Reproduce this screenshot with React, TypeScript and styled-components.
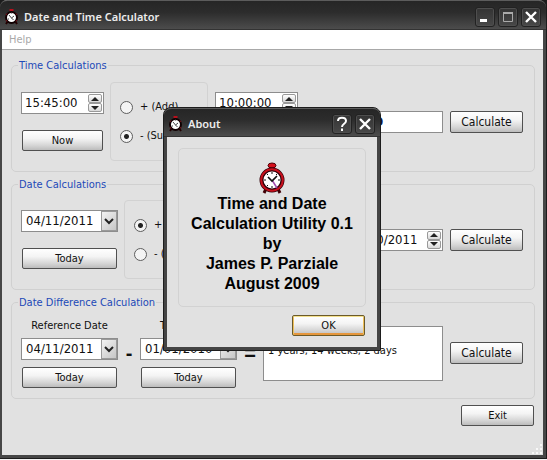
import React from "react";
import styled, { createGlobalStyle } from "styled-components";

const UI = '"DejaVu Sans Condensed", "DejaVu Sans", sans-serif';
const CAPTION = '"Noto Sans", "Open Sans", sans-serif';

const GlobalStyle = createGlobalStyle`
  *, *::before, *::after { box-sizing: border-box; }
  body { margin: 0; background: #2a2a2a; }
  button, input, select, textarea { font: inherit; color: inherit; margin: 0; }
`;

const Desktop = styled.div`
  min-height: 100vh;
  display: flex;
  flex-direction: column;
  padding: 0 1px 1px 0;
  border-bottom: 1px solid #f4f4f4;
  background: #1c1c1c;
  font: 11px/16px ${UI};
  color: #101010;
`;

const Window = styled.div`
  position: relative;
  flex: 1;
  display: flex;
  flex-direction: column;
  border: solid #464646;
  border-width: 0 3px 3px 2px;
  border-radius: 7px 7px 0 0;
  background: #e1e1e1;
`;

const TitleBar = styled.header`
  display: flex;
  align-items: center;
  height: 30px;
  margin: 0 -3px 0 -2px;
  padding: 3px 5px 0 4px;
  gap: 3px;
  border-top: 1px solid #5c5c5c;
  border-bottom: 1px solid #333;
  border-radius: 7px 7px 0 0;
  background: linear-gradient(#262626, #2c2c2c 40%, #4c4c4c);
`;

const Caption = styled.h1`
  flex: 1;
  margin: 0 0 0 1px;
  font: 600 11px/16px ${CAPTION};
  color: #ececec;
`;

const CaptionButton = styled.button`
  display: grid;
  place-items: center;
  width: 20px;
  height: 20px;
  padding: 0;
  border: 1px solid #222;
  border-radius: 3px;
  background: linear-gradient(#333, #484848);
  box-shadow: inset 0 0 0 1px #4e4e4e;
`;

const MenuBar = styled.nav`
  height: 20px;
  padding: 2px 6px 0;
  border-bottom: 1px solid #a8a8a8;
  background: #fff;
`;

const MenuItem = styled.button`
  display: block;
  padding: 0 1px;
  border: 0;
  background: none;
  &:disabled { color: #a9a9a9; }
`;

const Form = styled.main`
  display: flex;
  flex-direction: column;
  gap: 6px;
  padding: 9px 8px 0 9px;
`;

const Group = styled.fieldset<{ $top?: number }>`
  display: block;
  min-width: 0;
  margin: 0;
  padding: ${(p) => p.$top ?? 10}px 11px 10px 9px;
  border: 1px solid #d0d0d0;
  border-radius: 5px;
`;

const Legend = styled.legend`
  margin-left: -3px;
  padding: 0 1px;
  line-height: 13px;
  color: #2149b8;
`;

const Row = styled.div`
  display: flex;
  align-items: center;
`;

const Stack = styled.div<{ $wide?: boolean; $gap?: number }>`
  display: flex;
  flex: none;
  flex-direction: column;
  gap: ${(p) => p.$gap ?? 16}px;
  width: ${(p) => (p.$wide ? 97 : 83)}px;
`;

const RadioBox = styled.div`
  display: flex;
  flex: none;
  flex-direction: column;
  gap: 13px;
  width: 98px;
  height: 79px;
  margin: 0 7px 0 6px;
  padding: 16px 9px 0;
  border: 1px solid #d2d2d2;
  border-radius: 4px;
`;

const RadioLabel = styled.label`
  display: flex;
  align-items: center;
  gap: 7px;
  white-space: nowrap;
`;

const Radio = styled.input`
  appearance: none;
  flex: none;
  width: 13px;
  height: 13px;
  border: 1px solid #5e5e5e;
  border-radius: 50%;
  background: #f4f4f4;
  &:checked { background: radial-gradient(circle, #222 2px, #f4f4f4 3px); }
`;

const Field = styled.div<{ $wide?: boolean }>`
  display: flex;
  flex: none;
  width: ${(p) => (p.$wide ? "97px" : "auto")};
  height: 22px;
  padding: 1px;
  border: 1px solid #8d8d8d;
  background: #fff;
`;

const Value = styled.input`
  flex: 1;
  min-width: 0;
  width: 0;
  padding: 0 0 0 2px;
  border: 0;
  outline: 0;
  background: none;
  font-size: 13px;
  line-height: 18px;
`;

const Steps = styled.div`
  display: grid;
  flex: none;
  grid-template-rows: 1fr 1fr;
  width: 14px;
`;

const Step = styled.button`
  display: grid;
  place-items: center;
  padding: 0;
  border: 1px solid #999;
  border-radius: 2px;
  background: linear-gradient(#fff, #d8d8d8);
`;

const Picker = styled.div`
  display: grid;
  grid-template-columns: 1fr 16px;
  height: 22px;
  border: 1px solid #8d8d8d;
  background: #fff;
`;

const PickerSelect = styled.select`
  grid-area: 1 / 1 / 2 / 3;
  appearance: none;
  padding: 0 0 0 4px;
  border: 0;
  outline: 0;
  background: none;
  font-size: 13px;
`;

const PickerArrow = styled.span`
  grid-area: 1 / 2;
  display: grid;
  place-items: center;
  border: 1px solid #9a9a9a;
  background: linear-gradient(135deg, #f2f2f2, #c6c6c6);
  pointer-events: none;
`;

const Push = styled.button<{ $big?: boolean; $focus?: boolean }>`
  flex: none;
  width: ${(p) => (p.$big || p.$focus ? "73px" : "auto")};
  height: ${(p) => (p.$big ? 22 : 21)}px;
  margin: ${(p) => (p.$big || p.$focus ? "0" : "0 1px")};
  padding: 0;
  border: 1px solid #505050;
  border-radius: 2px;
  background: linear-gradient(#fff, #f4f4f4 40%, #d6d6d6 75%, #bcbcbc);
  font-size: ${(p) => (p.$big ? 12 : 11)}px;
  ${(p) =>
    p.$focus &&
    `border-color: #6b5a2a;
     box-shadow: inset 0 1px #f3e08c, inset 1px 0 #eec05c, inset -1px 0 #eec05c, inset 0 -2px #e5963c;`}
`;

const ExitButton = styled(Push)`
  width: 73px;
  align-self: flex-end;
`;

const Sign = styled.span<{ $width: number }>`
  flex: none;
  width: ${(p) => p.$width}px;
  font: bold 20px/22px "Liberation Sans", sans-serif;
  text-align: center;
`;

const Spacer = styled.span`
  flex: 1;
`;

const Result = styled.input`
  flex: 1;
  min-width: 0;
  width: 0;
  height: 22px;
  padding: 0 3px;
  border: 1px solid #8d8d8d;
  background: #fff;
  font-size: 13px;
  font-weight: bold;
  color: #10103c;
`;

const Summary = styled.textarea`
  flex: 1;
  min-width: 0;
  width: 0;
  height: 55px;
  padding: 16px 4px 0;
  border: 1px solid #8d8d8d;
  background: #fff;
  resize: none;
  overflow: hidden;
  line-height: 16px;
`;

const Calc = styled(Push)`
  margin-left: 7px;
`;

const FieldLabel = styled.label`
  margin-bottom: -3px;
  text-align: center;
`;

const Grip = styled.svg`
  align-self: flex-end;
  margin-top: auto;
`;

const Dialog = styled.section`
  position: absolute;
  top: 108px;
  left: 162px;
  width: 216px;
  border: solid #444;
  border-width: 0 3px 3px;
  border-radius: 7px 7px 0 0;
  outline: 1px solid #1d1d1d;
  background: #e1e1e1;
`;

const DialogBar = styled(TitleBar)`
  height: 29px;
  margin: 0 -3px;
`;

const DialogBody = styled.div`
  display: flex;
  flex-direction: column;
  gap: 8px;
  padding: 11px;
`;

const AboutBox = styled.div`
  display: flex;
  flex-direction: column;
  align-items: center;
  padding: 13px 0 12px;
  border: 1px solid #d2d2d2;
  border-radius: 5px;
`;

const AboutText = styled.p`
  margin: 0;
  font: bold 16px/20px "Liberation Sans", Arial, sans-serif;
  text-align: center;
  white-space: nowrap;
  color: #000;
`;

const OkButton = styled(Push)`
  align-self: flex-end;
  margin-right: 1px;
`;

function Clock() {
  return (
    <svg width="26" height="32" viewBox="0 0 26 32" aria-hidden="true">
      <path d="M7 27l-2 4M19 27l2 4" stroke="#400006" strokeWidth="3" />
      <path d="M11 5h4v4h-4z" fill="#500008" />
      <ellipse cx="13" cy="3.500" rx="4" ry="2.500" fill="#d5101c" stroke="#500008" />
      <circle cx="13" cy="18" r="10.500" fill="#fff" stroke="#30000a" strokeWidth="4" />
      <circle cx="13" cy="18" r="10.800" fill="none" stroke="#c8101c" strokeWidth="2" />
      <path d="M13 10v2M13 24v2M5 18h2M19 18h2M8 12l1 1M18 12l-1 1M8 24l1-1" stroke="#111" />
      <path d="M13 18l5 8" stroke="#a24aae" strokeWidth="1.500" />
      <path d="M9 15l4 4 5-5" fill="none" stroke="#111" strokeWidth="1.700" />
    </svg>
  );
}

function SmallClock() {
  return (
    <svg width="16" height="16" viewBox="0 0 16 16" aria-hidden="true">
      <path d="M4 12l-2 3M11 12l2 3" stroke="#200" strokeWidth="2" />
      <circle cx="7.500" cy="8.500" r="5.500" fill="#fff" stroke="#100002" strokeWidth="2" />
      <path d="M2 6l1-1.500M12 4.500L13 6M2 11l1 1.500M12 12.500l1-1.500" stroke="#80101a" />
      <path d="M5.500 0h4v2h-4z" fill="#b8101c" />
      <path d="M5 6l2.500 3L10 7M7.500 9l2 2M4 10h1M7 4h1" fill="none" stroke="#444" />
    </svg>
  );
}

function Close() {
  return (
    <svg width="12" height="12" viewBox="0 0 12 12">
      <path d="M1 1l10 10M11 1L1 11" stroke="#fff" strokeWidth="2.400" />
    </svg>
  );
}

function Spin({ label, value, wide }: { label: string; value: string; wide?: boolean }) {
  return (
    <Field $wide={wide}>
      <Value aria-label={label} defaultValue={value} />
      <Steps>
        <Step aria-label={`${label} up`}>
          <svg width="8" height="4"><path d="M0 4l4-4 4 4z" fill="#222" /></svg>
        </Step>
        <Step aria-label={`${label} down`}>
          <svg width="8" height="4"><path d="M0 0l4 4 4-4z" fill="#222" /></svg>
        </Step>
      </Steps>
    </Field>
  );
}

function DatePicker({ id, label, value }: { id?: string; label?: string; value: string }) {
  return (
    <Picker>
      <PickerArrow>
        <svg width="10" height="7" viewBox="0 0 10 7">
          <path d="M1 1l4 4 4-4" fill="none" stroke="#222" strokeWidth="2" />
        </svg>
      </PickerArrow>
      <PickerSelect id={id} aria-label={label}>
        <option>{value}</option>
      </PickerSelect>
    </Picker>
  );
}

function Operation({ name, add }: { name: string; add?: boolean }) {
  return (
    <RadioBox role="radiogroup" aria-label="Operation">
      <RadioLabel><Radio type="radio" name={name} defaultChecked={add} />+ (Add)</RadioLabel>
      <RadioLabel><Radio type="radio" name={name} defaultChecked={!add} />- (Subtract)</RadioLabel>
    </RadioBox>
  );
}

export default function App() {
  return (
    <Desktop>
      <GlobalStyle />
      <Window>
        <TitleBar>
          <SmallClock />
          <Caption>Date and Time Calculator</Caption>
          <CaptionButton aria-label="Minimize">
            <svg width="12" height="12"><path d="M1 8h7v3H1z" fill="#fff" /></svg>
          </CaptionButton>
          <CaptionButton aria-label="Maximize">
            <svg width="12" height="12">
              <path d="M1.500 1.500h9v9h-9z" fill="none" stroke="#aaa" />
              <path d="M1 1h10v2H1z" fill="#aaa" />
            </svg>
          </CaptionButton>
          <CaptionButton aria-label="Close"><Close /></CaptionButton>
        </TitleBar>
        <MenuBar><MenuItem disabled>Help</MenuItem></MenuBar>
        <Form>
          <Group>
            <Legend>Time Calculations</Legend>
            <Row>
              <Stack>
                <Spin label="First time" value="15:45:00" />
                <Push>Now</Push>
              </Stack>
              <Operation name="time-op" />
              <Stack>
                <Spin label="Second time" value="10:00:00" />
                <Push>Now</Push>
              </Stack>
              <Sign $width={23}>=</Sign>
              <Result aria-label="Time result" readOnly defaultValue="05:45:00" />
              <Calc $big>Calculate</Calc>
            </Row>
          </Group>
          <Group $top={9}>
            <Legend>Date Calculations</Legend>
            <Row>
              <Stack $wide>
                <DatePicker label="Start date" value="04/11/2011" />
                <Push>Today</Push>
              </Stack>
              <Operation name="date-op" add />
              <Spacer />
              <Spin label="Date result" value="04/10/2011" wide />
              <Calc $big>Calculate</Calc>
            </Row>
          </Group>
          <Group $top={9}>
            <Legend>Date Difference Calculation</Legend>
            <Row>
              <Stack $wide $gap={7}>
                <FieldLabel htmlFor="reference">Reference Date</FieldLabel>
                <DatePicker id="reference" value="04/11/2011" />
                <Push>Today</Push>
              </Stack>
              <Sign $width={22}>-</Sign>
              <Stack $wide $gap={7}>
                <FieldLabel htmlFor="target">Target Date</FieldLabel>
                <DatePicker id="target" value="01/01/2010" />
                <Push>Today</Push>
              </Stack>
              <Sign $width={26}>=</Sign>
              <Summary aria-label="Difference" readOnly defaultValue="1 years, 14 weeks, 2 days" />
              <Calc $big>Calculate</Calc>
            </Row>
          </Group>
          <ExitButton>Exit</ExitButton>
        </Form>
        <Grip width="12" height="12" aria-hidden="true">
          <path d="M9 1h2v2H9zM5 5h2v2H5zM9 5h2v2H9zM1 9h2v2H1zM5 9h2v2H5zM9 9h2v2H9z" fill="#f8f8f8" />
        </Grip>
        <Dialog role="dialog" aria-label="About">
          <DialogBar>
            <SmallClock />
            <Caption as="h2">About</Caption>
            <CaptionButton aria-label="Help">
              <svg width="12" height="16" viewBox="0 0 12 16">
                <path d="M2 5C2 0.500 10 0.500 10 5C10 8 6 7.500 6 11" fill="none" stroke="#fff" strokeWidth="2" />
                <path d="M5 12.500h2v2.500H5z" fill="#fff" />
              </svg>
            </CaptionButton>
            <CaptionButton aria-label="Close About"><Close /></CaptionButton>
          </DialogBar>
          <DialogBody>
            <AboutBox>
              <Clock />
              <AboutText>
                Time and Date<br />Calculation Utility 0.1<br />by<br />James P. Parziale<br />August 2009
              </AboutText>
            </AboutBox>
            <OkButton $focus>OK</OkButton>
          </DialogBody>
        </Dialog>
      </Window>
    </Desktop>
  );
}
